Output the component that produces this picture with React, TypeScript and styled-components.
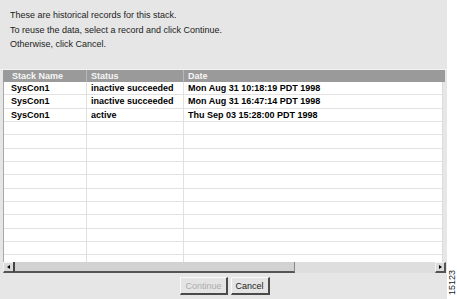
import React from "react";
import styled, { createGlobalStyle } from "styled-components";

const Global = createGlobalStyle`
  html, body { margin: 0; padding: 0; background: #ffffff; }
  body { font-family: "Liberation Sans", Arial, sans-serif; }
  * { box-sizing: border-box; }
`;

const Page = styled.div`
  display: flex;
  width: 457px;
  height: 299px;
  overflow: hidden;
`;

const Dialog = styled.div`
  width: 447px;
  height: 299px;
  background: #e6e6e6;
  display: flex;
  flex-direction: column;
`;

const Message = styled.div`
  height: 70px;
  padding: 8px 10px 0;
  font-size: 9px;
  line-height: 14.5px;
  color: #222;
  border-bottom: 1px solid #f2f2f2;
`;

const TableArea = styled.div`
  margin-left: 3px;
  width: 442px;
  display: flex;
  flex-direction: column;
`;

const cols = "83px 97px 1fr";

const HeaderRow = styled.div`
  display: grid;
  grid-template-columns: ${cols};
  height: 12px;
  background: #9a9a9a;
`;

const HeaderCell = styled.div<{ $first?: boolean }>`
  padding-left: ${(p) => (p.$first ? "9px" : "4px")};
  border-left: ${(p) => (p.$first ? "none" : "1px solid #b8b8b8")};
  font-size: 9px;
  font-weight: bold;
  line-height: 12px;
  color: #f6f6f6;
  white-space: nowrap;
`;

const Body = styled.div`
  height: 180px;
  background: #ffffff;
  border-left: 1px solid #a8a8a8;
  border-right: 1px solid #dcdcdc;
  margin-right: 2px;
  overflow: hidden;
`;

const Row = styled.div`
  display: grid;
  grid-template-columns: 82px 97px 1fr;
  height: 13.333px;
  border-bottom: 1px solid #e2e2e2;
`;

const Cell = styled.div<{ $first?: boolean }>`
  padding-left: ${(p) => (p.$first ? "7px" : "4px")};
  border-left: ${(p) => (p.$first ? "none" : "1px solid #e0e0e0")};
  font-size: 9px;
  font-weight: bold;
  line-height: 13px;
  color: #000;
  white-space: nowrap;
  overflow: hidden;
`;

const ScrollBar = styled.div`
  display: flex;
  height: 11px;
  margin-right: -1px;
  background: #dedede;
`;

const ArrowButton = styled.div<{ $right?: boolean }>`
  width: ${(p) => (p.$right ? "11px" : "10px")};
  height: 11px;
  background: #dadada;
  border-top: 1px solid #f4f4f4;
  border-left: 1px solid #f4f4f4;
  border-right: ${(p) => (p.$right ? "2px solid #555" : "none")};
  border-bottom: ${(p) => (p.$right ? "2px solid #555" : "2px solid #555")};
  display: flex;
  align-items: center;
  justify-content: center;
  margin-left: ${(p) => (p.$right ? "auto" : "0")};
`;

const Thumb = styled.div`
  width: 282px;
  height: 11px;
  background: #d2d2d2;
  border-left: 2px solid #444;
  border-right: 1px solid #888;
  border-bottom: 2px solid #555;
`;

const ButtonBar = styled.div`
  flex: 1;
  display: flex;
  justify-content: center;
  align-items: flex-start;
  gap: 3px;
  padding-top: 4px;
  padding-left: 3px;
`;

const Button = styled.button<{ $disabled?: boolean }>`
  height: 18px;
  padding: 0 4px;
  margin: 0;
  font-family: "Liberation Sans", Arial, sans-serif;
  font-size: 9px;
  line-height: 14px;
  color: ${(p) => (p.$disabled ? "#acacac" : "#1a1a1a")};
  background: #e4e4e4;
  border-top: 1px solid #fafafa;
  border-left: 1px solid #fafafa;
  border-right: 2px solid #4a4a4a;
  border-bottom: 2px solid #4a4a4a;
  border-radius: 0;
  cursor: default;
`;

const Side = styled.div`
  width: 10px;
  display: flex;
  flex-direction: column;
  justify-content: flex-end;
  align-items: center;
  padding-bottom: 4px;
`;

const FigureNo = styled.span`
  writing-mode: vertical-rl;
  transform: rotate(180deg);
  font-size: 9px;
  line-height: 10px;
  color: #222;
`;

const records = [
  ["SysCon1", "inactive succeeded", "Mon Aug 31 10:18:19 PDT 1998"],
  ["SysCon1", "inactive succeeded", "Mon Aug 31 16:47:14 PDT 1998"],
  ["SysCon1", "active", "Thu Sep 03 15:28:00 PDT 1998"],
];

const TOTAL_ROWS = 14;

export default function App() {
  const rows = Array.from({ length: TOTAL_ROWS }, (_, i) => records[i] ?? ["", "", ""]);
  return (
    <>
      <Global />
      <Page>
        <Dialog>
          <Message>
            <div>These are historical records for this stack.</div>
            <div>To reuse the data, select a record and click Continue.</div>
            <div>Otherwise, click Cancel.</div>
          </Message>
          <TableArea>
            <HeaderRow>
              <HeaderCell $first>Stack Name</HeaderCell>
              <HeaderCell>Status</HeaderCell>
              <HeaderCell>Date</HeaderCell>
            </HeaderRow>
            <Body>
              {rows.map((r, i) => (
                <Row key={i}>
                  <Cell $first>{r[0]}</Cell>
                  <Cell>{r[1]}</Cell>
                  <Cell>{r[2]}</Cell>
                </Row>
              ))}
            </Body>
            <ScrollBar>
              <ArrowButton>
                <svg width="3" height="4" viewBox="0 0 3 4">
                  <path d="M3 0 L0 2 L3 4 Z" fill="#000" />
                </svg>
              </ArrowButton>
              <Thumb />
              <ArrowButton $right>
                <svg width="3" height="4" viewBox="0 0 3 4">
                  <path d="M0 0 L3 2 L0 4 Z" fill="#000" />
                </svg>
              </ArrowButton>
            </ScrollBar>
          </TableArea>
          <ButtonBar>
            <Button $disabled>Continue</Button>
            <Button>Cancel</Button>
          </ButtonBar>
        </Dialog>
        <Side>
          <FigureNo>15123</FigureNo>
        </Side>
      </Page>
    </>
  );
}
